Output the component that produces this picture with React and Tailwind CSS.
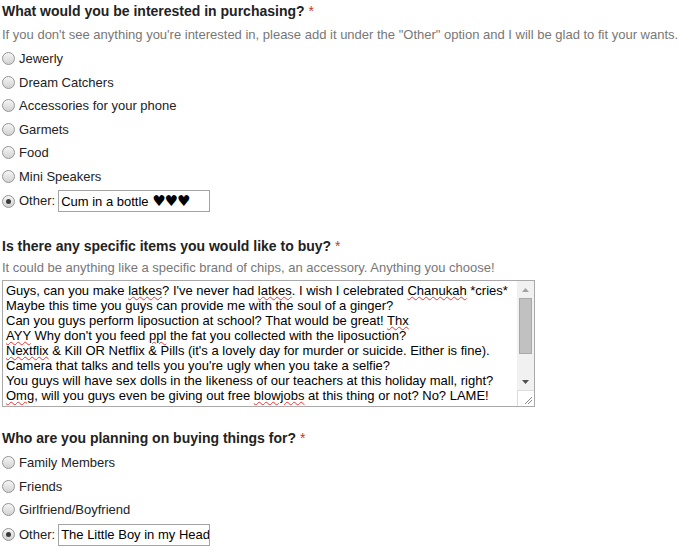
import React from "react";

const Radio = ({ checked }) => (
  <span className="relative inline-flex w-[13px] h-[13px] rounded-full border border-[#959595] bg-gradient-to-b from-[#f6f6f6] to-[#d2d2d2] items-center justify-center shrink-0">
    {checked && <span className="w-[5px] h-[5px] rounded-full bg-[#3a3a3a]" />}
  </span>
);

const Row = ({ label, checked, children, tall }) => (
  <div className={`flex items-center ${tall ? "h-[26px]" : "h-[23.5px]"}`}>
    <span className="ml-[2px] mr-[4px] flex items-center">
      <Radio checked={checked} />
    </span>
    <span className="text-[13px] text-[#222]">{label}</span>
    {children}
  </div>
);

const Title = ({ children, className = "" }) => (
  <div className={`text-[14px] leading-[20px] font-bold text-[#222] ${className}`}>
    {children} <span className="text-[#c43b1d] font-normal">*</span>
  </div>
);

const Sp = ({ children }) => (
  <span className="underline decoration-wavy decoration-[#e33] decoration-[1px] underline-offset-[1px]">{children}</span>
);

const OtherInput = ({ children }) => (
  <div className="ml-[3px] w-[152px] h-[22px] border border-[#a3a3a3] flex items-center pl-[2px] text-[13px] text-black whitespace-nowrap overflow-hidden">
    <span>{children}</span>
  </div>
);

export default function App() {
  return (
    <div className="w-[679px] h-[548px] bg-white overflow-hidden pl-[2px] pt-[1px]" style={{ fontFamily: '"Liberation Sans", Arial, sans-serif' }}>
      <Title>What would you be interested in purchasing?</Title>
      <div className="mt-[6px] text-[13px] leading-[16px] text-[#777] whitespace-nowrap">
        If you don't see anything you're interested in, please add it under the "Other" option and I will be glad to fit your wants.
      </div>
      <div className="mt-[4px] -ml-[2px]">
        <Row label="Jewerly" />
        <Row label="Dream Catchers" />
        <Row label="Accessories for your phone" />
        <Row label="Garmets" />
        <Row label="Food" />
        <Row label="Mini Speakers" />
        <Row label="Other:" checked tall>
          <OtherInput>Cum in a bottle <span className="text-[15px] tracking-[-1px]" style={{ fontFamily: '"DejaVu Sans", sans-serif' }}>♥♥♥</span></OtherInput>
        </Row>
      </div>

      <Title className="mt-[22px]">Is there any specific items you would like to buy?</Title>
      <div className="mt-[4px] text-[13px] leading-[16px] text-[#777] whitespace-nowrap">
        It could be anything like a specific brand of chips, an accessory. Anything you choose!
      </div>
      <div className="mt-[4px] w-[533px] h-[127px] border border-[#a9a9a9] flex">
        <div className="flex-1 pl-[3px] pt-[2px] text-[13px] leading-[15px] text-black whitespace-nowrap overflow-hidden">
          <div>Guys, can you make <Sp>latkes</Sp>? I've never had <Sp>latkes</Sp>. I wish I celebrated <Sp>Chanukah</Sp> *cries*</div>
          <div>Maybe this time you guys can provide me with the soul of a ginger?</div>
          <div>Can you guys perform liposuction at school? That would be great! <Sp>Thx</Sp></div>
          <div><Sp>AYY</Sp> Why don't you feed <Sp>ppl</Sp> the fat you collected with the liposuction?</div>
          <div><Sp>Nextflix</Sp> &amp; Kill OR Netflix &amp; Pills (it's a lovely day for murder or suicide. Either is fine).</div>
          <div>Camera that talks and tells you you're ugly when you take a selfie?</div>
          <div>You guys will have sex dolls in the likeness of our teachers at this holiday mall, right?</div>
          <div><Sp>Omg</Sp>, will you guys even be giving out free <Sp>blowjobs</Sp> at this thing or not? No? LAME!</div>
        </div>
        <div className="w-[17px] flex flex-col bg-[#f1f1f1]">
          <div className="h-[17px] flex items-center justify-center">
            <svg width="7" height="4" viewBox="0 0 7 4"><path d="M0 4 L3.5 0 L7 4 Z" fill="#a3a3a3" /></svg>
          </div>
          <div className="mx-[2px] h-[56px] bg-[#c1c1c1] border border-[#a8a8a8]" />
          <div className="flex-1" />
          <div className="h-[17px] flex items-center justify-center">
            <svg width="7" height="4" viewBox="0 0 7 4"><path d="M0 0 L7 0 L3.5 4 Z" fill="#505050" /></svg>
          </div>
          <div className="h-[16px] bg-white border-t border-l border-[#dcdcdc] relative">
            <svg className="absolute right-[1px] bottom-[1px]" width="9" height="9" viewBox="0 0 9 9">
              <path d="M1 8 L8 1 M4 8 L8 4" stroke="#8a8a8a" strokeWidth="1" />
            </svg>
          </div>
        </div>
      </div>

      <Title className="mt-[21px]">Who are you planning on buying things for?</Title>
      <div className="mt-[3px] -ml-[2px]">
        <Row label="Family Members" />
        <Row label="Friends" />
        <Row label="Girlfriend/Boyfriend" />
        <Row label="Other:" checked tall>
          <OtherInput>The Little Boy in my Head</OtherInput>
        </Row>
      </div>
    </div>
  );
}
